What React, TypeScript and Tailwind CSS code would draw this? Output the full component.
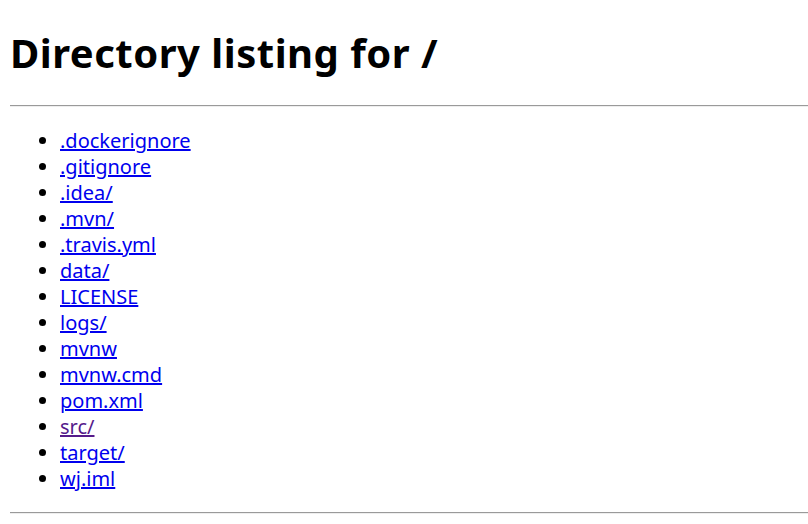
const files = [
  { name: ".dockerignore" },
  { name: ".gitignore" },
  { name: ".idea/" },
  { name: ".mvn/" },
  { name: ".travis.yml" },
  { name: "data/" },
  { name: "LICENSE" },
  { name: "logs/" },
  { name: "mvnw" },
  { name: "mvnw.cmd" },
  { name: "pom.xml" },
  { name: "src/", visited: true },
  { name: "target/" },
  { name: "wj.iml" },
];

export default function App() {
  return (
    <div
      className="min-h-[524px] bg-white pl-[10px] pt-[26px] text-black"
      style={{ fontFamily: '"Noto Sans", "Open Sans", sans-serif' }}
    >
      <h1 className="text-[40px] font-bold leading-[53px] tracking-[0.5px]">Directory listing for /</h1>
      <hr className="mt-[26px] border-t border-b border-t-[#9a9a9a] border-b-[#eeeeee]" />
      <ul className="mt-[21px] mb-[20px] list-disc pl-[50px] text-[20px] leading-[26px]">
        {files.map((f) => (
          <li key={f.name}>
            <a
              href={`#${f.name}`}
              className={f.visited ? "text-[#551a8b] underline" : "text-[#0000ee] underline"}
            >
              {f.name}
            </a>
          </li>
        ))}
      </ul>
      <hr className="border-t border-b border-t-[#9a9a9a] border-b-[#eeeeee]" />
    </div>
  );
}
